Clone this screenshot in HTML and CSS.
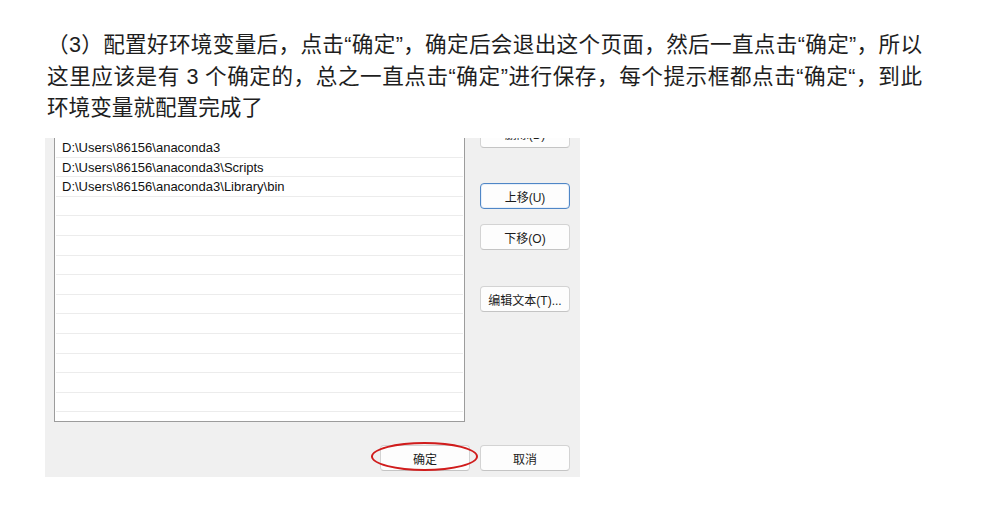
FILE: index.html
```html
<!DOCTYPE html>
<html lang="zh-CN">
<head>
<meta charset="utf-8">
<title>配置环境变量</title>
<link rel="stylesheet" href="styles.css">
</head>
<body>
<div class="page">
  <div class="para">
    <span class="line line-full">（3）配置好环境变量后，点击“确定”，确定后会退出这个页面，然后一直点击“确定”，所以</span>
    <span class="line line-full">这里应该是有 3 个确定的，总之一直点击“确定”进行保存，每个提示框都点击“确定“，到此</span>
    <span class="line">环境变量就配置完成了</span>
  </div>

  <div class="shot">
    <div class="main">
      <div class="listbox">
        <div class="row">D:\Users\86156\anaconda3</div>
        <div class="row">D:\Users\86156\anaconda3\Scripts</div>
        <div class="row">D:\Users\86156\anaconda3\Library\bin</div>
        <div class="row"></div>
        <div class="row"></div>
        <div class="row"></div>
        <div class="row"></div>
        <div class="row"></div>
        <div class="row"></div>
        <div class="row"></div>
        <div class="row"></div>
        <div class="row"></div>
        <div class="row"></div>
        <div class="row"></div>
        <div class="row"></div>
      </div>
      <div class="side">
        <button class="btn btn-cut">删除(D)</button>
        <button class="btn btn-focus btn-up">上移(U)</button>
        <button class="btn btn-down">下移(O)</button>
        <button class="btn btn-edit">编辑文本(T)...</button>
      </div>
    </div>
    <div class="footer">
      <div class="ok-wrap">
        <button class="btn">确定</button>
        <span class="ring"></span>
      </div>
      <button class="btn">取消</button>
    </div>
  </div>
</div>
</body>
</html>
```

FILE: styles.css
```css
html, body {
  margin: 0;
  padding: 0;
  background: #ffffff;
}

.page {
  padding: 29px 0 0 47px;
}

.para {
  width: 875px;
  font-family: "Liberation Sans", "Noto Sans CJK SC", sans-serif;
  font-size: 21.6px;
  line-height: 31.5px;
  color: #1e1e1e;
}

.line {
  display: block;
  white-space: nowrap;
}

.line-full {
  text-align: justify;
  text-align-last: justify;
  white-space: normal;
}

.shot {
  margin: 14.5px 0 0 -2px;
  width: 535px;
  height: 339px;
  background: #f0f0f0;
  overflow: hidden;
  display: flex;
  flex-direction: column;
}

.main {
  display: flex;
  height: 284px;
  padding-left: 9px;
}

.listbox {
  width: 411px;
  height: 284px;
  box-sizing: border-box;
  background: #ffffff;
  border: 1px solid #9c9c9c;
  border-top: none;
  overflow: hidden;
  padding: 0 1px;
}

.row {
  height: 19.6px;
  box-sizing: border-box;
  border-bottom: 1px solid #ececec;
  padding-left: 6px;
  font-family: "Liberation Sans", "Noto Sans", sans-serif;
  font-size: 13px;
  line-height: 19px;
  color: #111111;
  white-space: nowrap;
}

.side {
  display: flex;
  flex-direction: column;
  margin-left: 15px;
  width: 90px;
}

.btn {
  display: block;
  width: 90px;
  height: 26px;
  box-sizing: border-box;
  background: #fdfdfd;
  border: 1px solid #d3d3d3;
  border-bottom-color: #c4c4c4;
  border-radius: 4px;
  padding: 0;
  font-family: "Liberation Sans", "Noto Sans CJK SC", sans-serif;
  font-size: 12px;
  color: #1b1b1b;
  text-align: center;
  flex: none;
}

.btn-cut {
  margin-top: -16px;
  padding-bottom: 4px;
}

.btn-focus {
  border: 1px solid #4f86c6;
  box-shadow: inset 0 0 0 1px #e6effa;
}

.btn-up {
  margin-top: 35px;
}

.btn-down {
  margin-top: 15px;
}

.btn-edit {
  margin-top: 36px;
}

.footer {
  display: flex;
  justify-content: flex-end;
  gap: 10px;
  margin-top: 23px;
  padding-right: 10px;
}

.ok-wrap {
  position: relative;
}

.ring {
  position: absolute;
  left: -9px;
  top: -3px;
  width: 107px;
  height: 29px;
  box-sizing: border-box;
  border: 2px solid #d01c1c;
  border-radius: 50%;
  pointer-events: none;
}
```
